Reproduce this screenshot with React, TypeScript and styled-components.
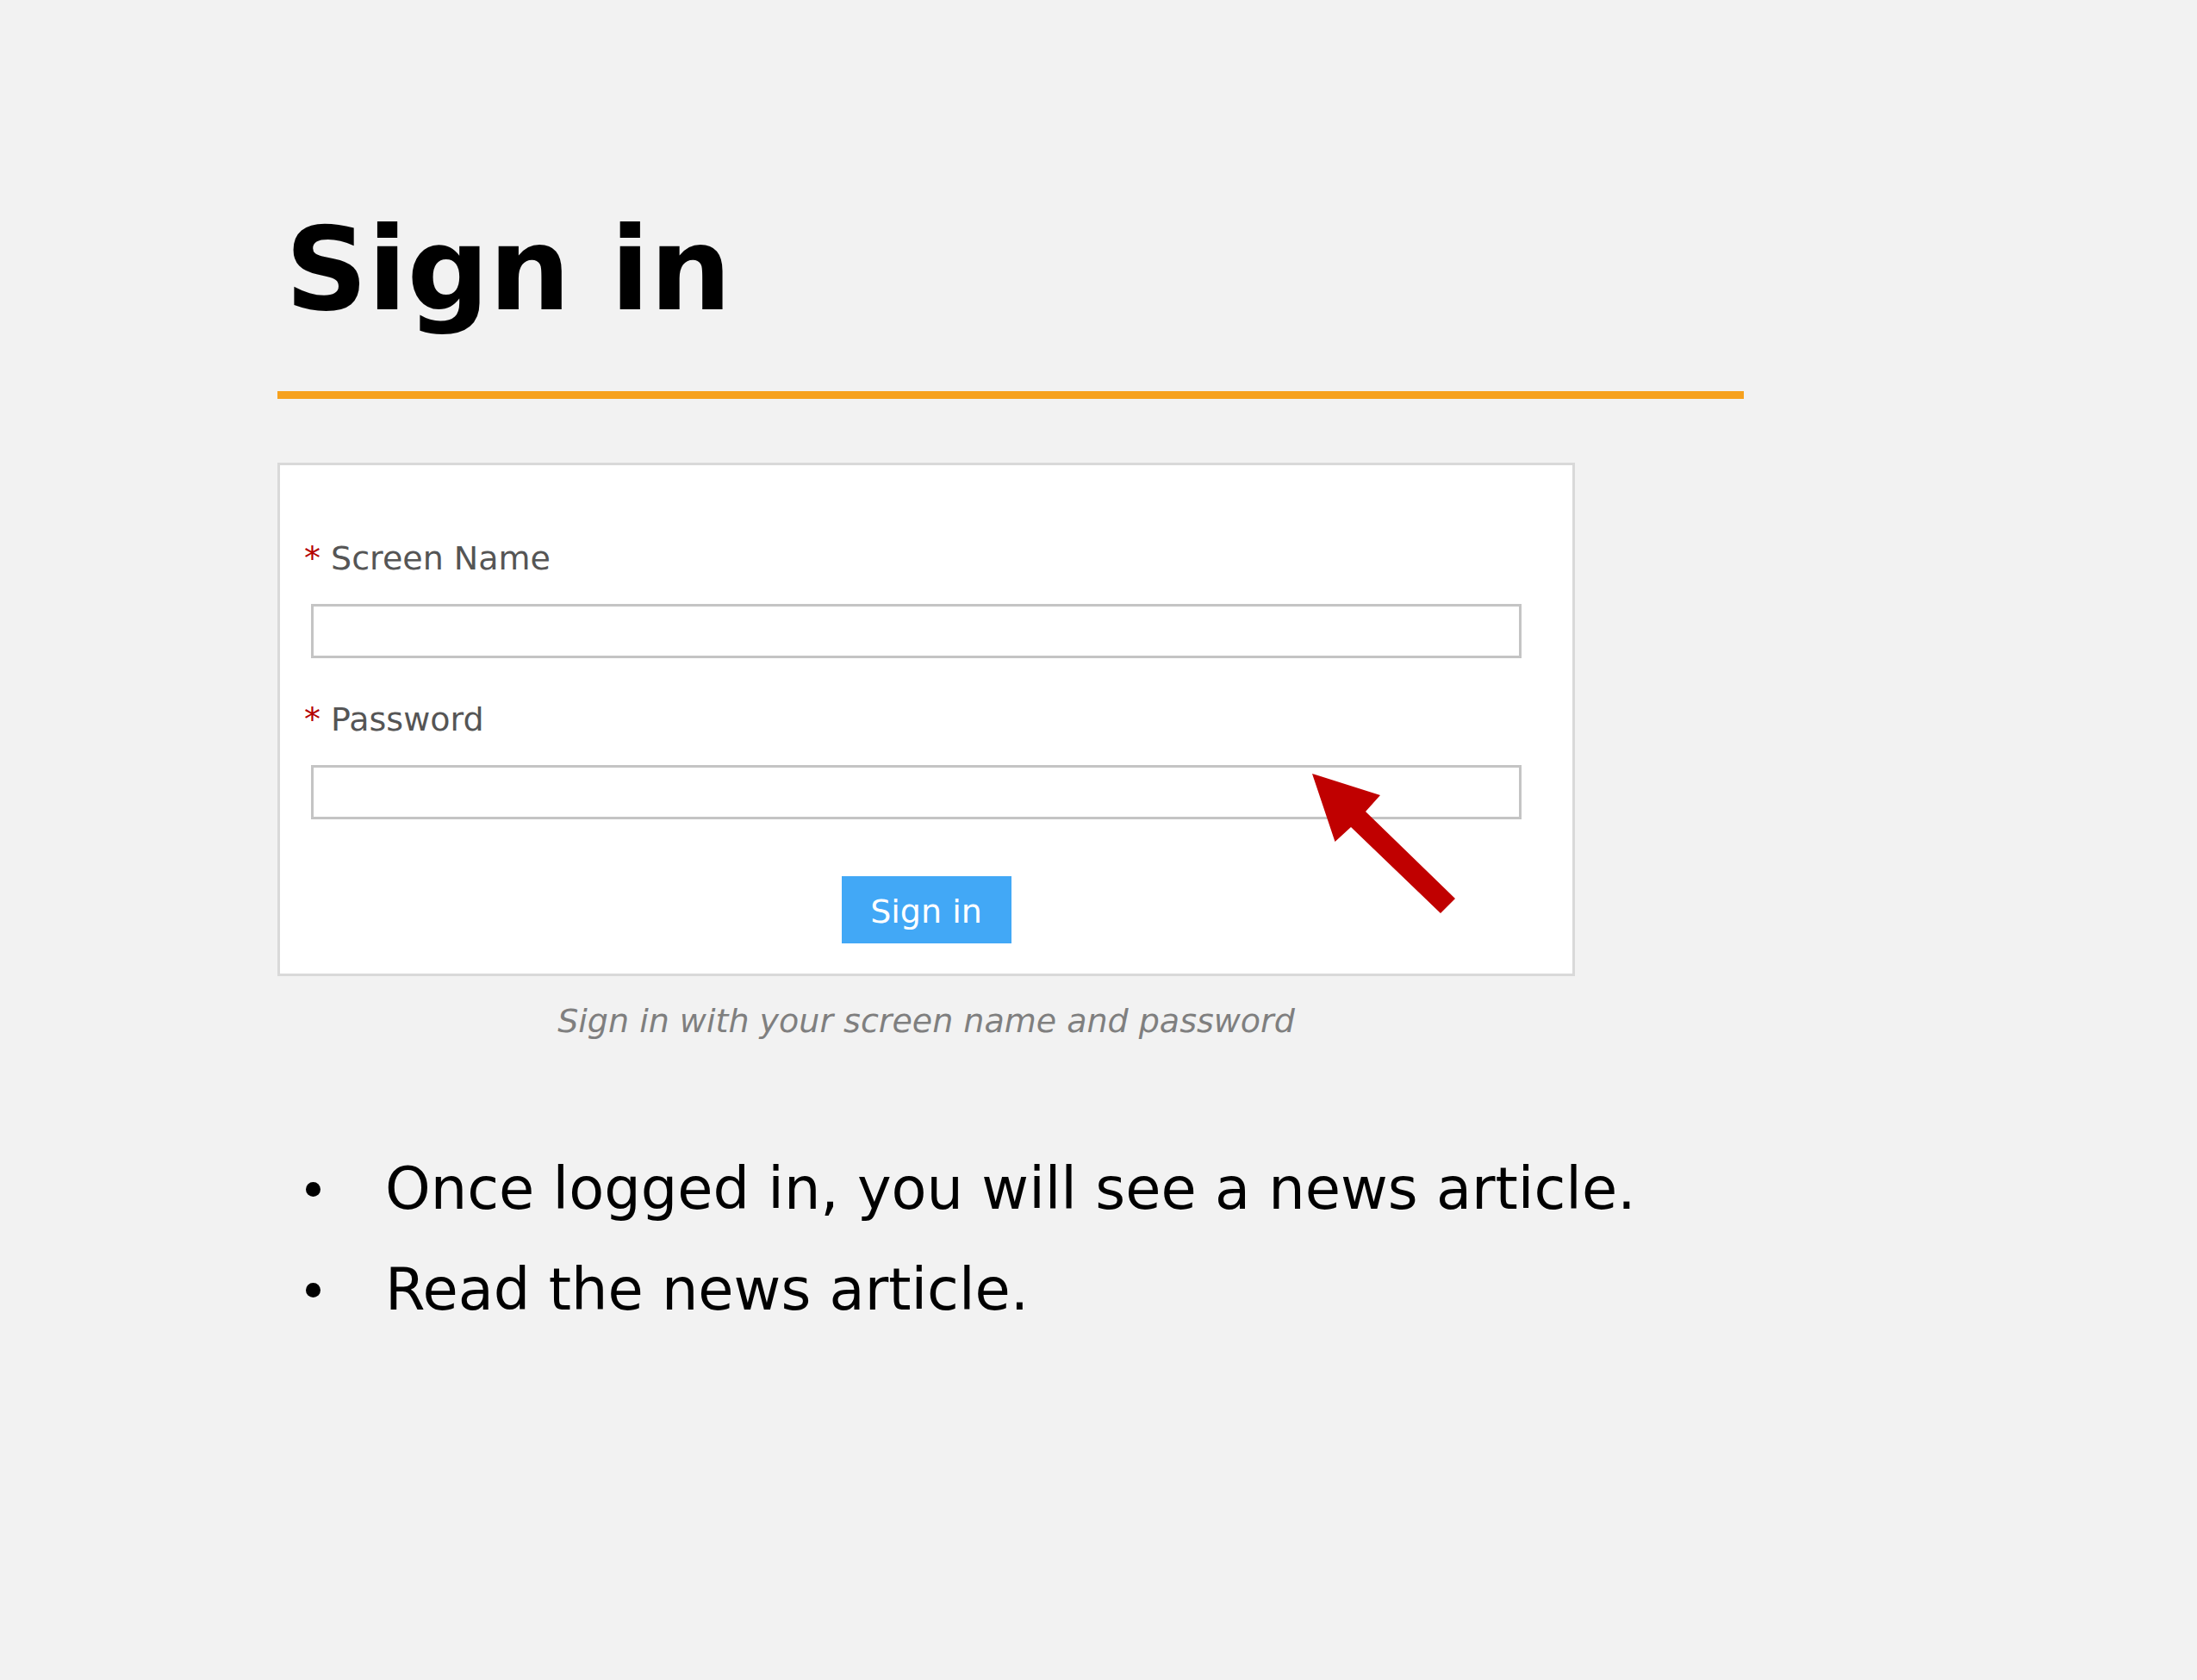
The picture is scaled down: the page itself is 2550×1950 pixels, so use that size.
import React from "react";
import styled, { createGlobalStyle } from "styled-components";

const GlobalStyle = createGlobalStyle`
    html, body {
        margin: 0;
        padding: 0;
        background: #f2f2f2;
    }
    body {
        font-family: "DejaVu Sans", Verdana, sans-serif;
        min-height: 1950px;
    }
`;

const Page = styled.div`
    padding: 0 0 0 322px;
    width: 1702px;
`;

const Title = styled.h1`
    margin: 236px 0 0 0;
    padding-left: 9px;
    font-size: 133px;
    line-height: 155px;
    font-weight: bold;
    color: #000;
`;

const Rule = styled.div`
    margin-top: 63px;
    height: 9px;
    width: 1702px;
    background: #f6a11e;
`;

const FormBox = styled.form`
    position: relative;
    margin-top: 74px;
    width: 1506px;
    box-sizing: border-box;
    background: #fff;
    border: 3px solid #d9d9d9;
    padding: 86px 28px 35px 28px;
`;

const Field = styled.div<{ first?: boolean }>`
    display: flex;
    flex-direction: column;
    margin-top: ${(p) => (p.first ? "0" : "49px")};
`;

const Label = styled.label`
    font-size: 38px;
    line-height: 44px;
    color: #555;
`;

const Required = styled.span`
    color: #b50000;
`;

const Input = styled.input`
    margin: 31px 0 0 8px;
    width: 1405px;
    height: 63px;
    box-sizing: border-box;
    border: 3px solid #c4c4c4;
    background: #fff;
    outline: none;
`;

const ButtonRow = styled.div`
    display: flex;
    justify-content: center;
    margin-top: 66px;
`;

const Button = styled.button`
    width: 197px;
    height: 78px;
    padding: 3px 0 0 0;
    border: none;
    background: #42a8f6;
    color: #fff;
    font-family: "DejaVu Sans", Verdana, sans-serif;
    font-size: 38px;
    line-height: 44px;
`;

const Arrow = styled.svg`
    position: absolute;
    left: 1195px;
    top: 355px;
    width: 175px;
    height: 170px;
    pointer-events: none;
`;

const Caption = styled.p`
    margin: 30px 0 0 0;
    width: 1506px;
    text-align: center;
    font-size: 38px;
    line-height: 44px;
    font-style: italic;
    color: #7f7f7f;
`;

const List = styled.ul`
    list-style: none;
    margin: 134px 0 0 0;
    padding: 0;
`;

const Item = styled.li`
    display: flex;
    align-items: center;
    font-size: 67px;
    line-height: 79px;
    color: #000;
    margin-bottom: 38px;
`;

const Dot = styled.span`
    width: 17px;
    height: 17px;
    border-radius: 50%;
    background: #000;
    margin: 0 75px 0 33px;
    flex-shrink: 0;
`;

const bullets = [
    "Once logged in, you will see a news article.",
    "Read the news article.",
];

export default function App(): JSX.Element {
    return (
        <>
            <GlobalStyle />
            <Page>
                <Title>Sign in</Title>
                <Rule />
                <FormBox onSubmit={(e) => e.preventDefault()}>
                    <Field first>
                        <Label><Required>*</Required> Screen Name</Label>
                        <Input type="text" name="screenName" />
                    </Field>
                    <Field>
                        <Label><Required>*</Required> Password</Label>
                        <Input type="password" name="password" />
                    </Field>
                    <ButtonRow>
                        <Button type="submit">Sign in</Button>
                    </ButtonRow>
                    <Arrow viewBox="0 0 175 170">
                        <polygon
                            points="3,3 82,28 65,47 169,148 152,165 48,65 29.5,82"
                            fill="#c00000"
                        />
                    </Arrow>
                </FormBox>
                <Caption>Sign in with your screen name and password</Caption>
                <List>
                    {bullets.map((b) => (
                        <Item key={b}>
                            <Dot />
                            {b}
                        </Item>
                    ))}
                </List>
            </Page>
        </>
    );
}
